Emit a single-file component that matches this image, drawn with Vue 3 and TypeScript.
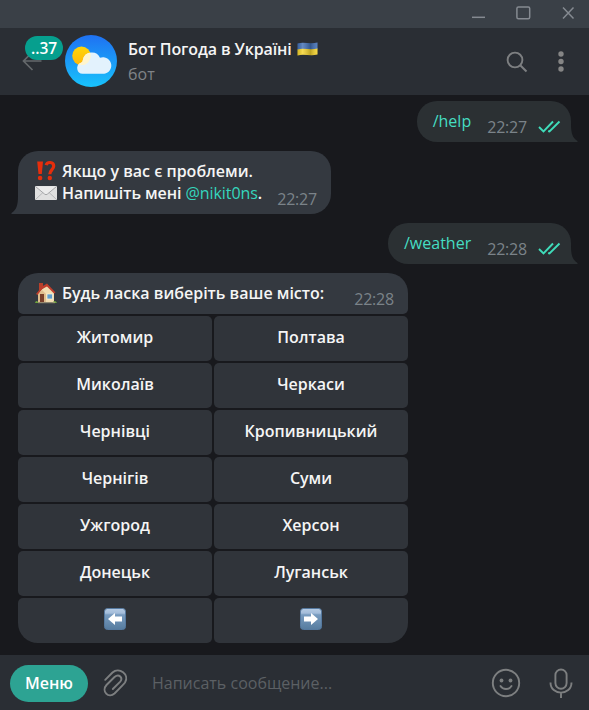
<script setup lang="ts">
interface Row {
  left: string
  right: string
}

const rows: Row[] = [
  { left: 'Житомир', right: 'Полтава' },
  { left: 'Миколаїв', right: 'Черкаси' },
  { left: 'Чернівці', right: 'Кропивницький' },
  { left: 'Чернігів', right: 'Суми' },
  { left: 'Ужгород', right: 'Херсон' },
  { left: 'Донецьк', right: 'Луганськ' },
]
</script>

<template>
  <div class="window">
    <div class="titlebar">
      <svg width="113" height="28" viewBox="0 0 113 28" fill="none" stroke="#858a91" stroke-width="1.5">
        <path d="M0 17.3H13" />
        <rect x="44.900" y="7" width="12.800" height="11.800" rx="1.500" />
        <path d="M91 7.5L101.500 18.500M101.500 7.500L91 18.500" />
      </svg>
    </div>

    <header class="header">
      <div class="back">
        <svg width="20" height="22" viewBox="0 0 20 22" fill="none" stroke="#64686b" stroke-width="1.7">
          <path d="M19.500 10H1.500M10.500 1L1.500 10L10.500 19" />
        </svg>
        <span class="badge">..37</span>
      </div>
      <svg class="avatar" width="52" height="52" viewBox="0 0 52 52">
        <defs>
          <linearGradient id="sky" x1="0" y1="0" x2="0" y2="1">
            <stop offset="0" stop-color="#1f71f2" />
            <stop offset="1" stop-color="#18c3fc" />
          </linearGradient>
          <linearGradient id="sun" x1="0" y1="0" x2="0" y2="1">
            <stop offset="0" stop-color="#ffd60a" />
            <stop offset="1" stop-color="#ffb70a" />
          </linearGradient>
          <clipPath id="cloud">
            <path d="M17.500 38.700A5.600 5.600 0 0 1 15.500 28Q18 27 18 24.500A9 9 0 0 1 35 22.800A8.300 8.300 0 1 1 36.500 38.700z" />
          </clipPath>
        </defs>
        <circle cx="26" cy="26" r="26" fill="url(#sky)" />
        <circle cx="16.500" cy="20.800" r="9.300" fill="url(#sun)" />
        <path d="M17.500 38.700A5.600 5.600 0 0 1 15.500 28Q18 27 18 24.500A9 9 0 0 1 35 22.800A8.300 8.300 0 1 1 36.500 38.700z" fill="#e3f2fd" />
        <circle cx="16.500" cy="20.800" r="9.300" fill="#fff5cf" clip-path="url(#cloud)" />
      </svg>
      <div class="peer">
        <div class="name">
          <span>Бот Погода в Україні</span>
          <svg width="21" height="16" viewBox="0 0 21 16">
            <defs>
              <linearGradient id="fold" x1="0" y1="0" x2="1" y2="0">
                <stop offset="0" stop-color="#000" stop-opacity=".12" />
                <stop offset=".25" stop-color="#fff" stop-opacity=".18" />
                <stop offset=".65" stop-color="#000" stop-opacity=".22" />
                <stop offset="1" stop-color="#fff" stop-opacity=".12" />
              </linearGradient>
            </defs>
            <path d="M.5 2.500C7 .5 13 3.500 20.500 1.500V8C13 10 7 7 .5 9z" fill="#416fb4" />
            <path d="M.5 8.500C7 6.500 13 9.500 20.500 7.500V13.500C13 15.500 7 12.500 .5 14.500z" fill="#f5d32c" />
            <path d="M.5 2.500C7 .5 13 3.500 20.500 1.500V13.500C13 15.500 7 12.500 .5 14.500z" fill="url(#fold)" />
          </svg>
        </div>
        <div class="status">бот</div>
      </div>
      <svg class="search" width="22" height="22" viewBox="0 0 22 22" fill="none" stroke="#7d7f81" stroke-width="1.900">
        <circle cx="9" cy="9" r="7.400" />
        <path d="M14.200 14.200L20.500 20.500" stroke-width="2" />
      </svg>
      <svg width="6" height="22" viewBox="0 0 6 22" fill="#858585">
        <circle cx="3" cy="3" r="2.700" />
        <circle cx="3" cy="10.500" r="2.700" />
        <circle cx="3" cy="18" r="2.700" />
      </svg>
    </header>

    <main class="chat">
      <div class="bubble out">
        <span class="command">/help</span>
        <span class="time">22:27</span>
        <svg class="ticks" width="23" height="13" viewBox="0 0 23 13" fill="none" stroke="#3fdcba" stroke-width="1.900">
          <path d="M1 7L5.500 11.500L15 1.500M10.200 11L11.500 11.500L21.500 1.500" />
        </svg>
        <svg class="tail" width="8" height="18" viewBox="0 0 8 18"><path d="M0 0H1C1 9 2.500 14 7.500 17V18H0z" fill="#2b3033" /></svg>
      </div>

      <div class="bubble in help">
        <div class="body">
          <div class="line">
            <svg class="emoji" width="22" height="22" viewBox="0 0 22 22">
              <path d="M2.200 1.500H8L6.800 14H3.500z" fill="#e62e0c" />
              <circle cx="5.100" cy="18" r="2.300" fill="#e62e0c" />
              <path d="M11.200 5.200C12 1.500 18.700 1.500 18.700 6C18.700 9.800 14.800 10 14.800 14.200" fill="none" stroke="#e62e0c" stroke-width="3.200" />
              <circle cx="14.800" cy="18" r="2.200" fill="#e62e0c" />
            </svg>
            <span>Якщо у вас є проблеми.</span>
          </div>
          <div class="line">
            <svg class="emoji" width="22" height="22" viewBox="0 0 22 22">
              <rect y="4" width="22" height="14" rx="1" fill="#e0e0e0" />
              <path d="M1 17L8.500 10M21 17L13.500 10" stroke="#b8b9bb" fill="none" />
              <path d="M.5 4.500L9.500 12Q11 13.500 12.500 12L21.500 4.500" fill="#ececec" stroke="#a5a6a8" />
            </svg>
            <span class="contact">Напишіть мені <a class="mention">@nikit0ns</a>.</span>
          </div>
        </div>
        <span class="time">22:27</span>
        <svg class="tail" width="8" height="18" viewBox="0 0 8 18"><path d="M8 0H7C7 9 5.500 14 .5 17V18H8z" fill="#343940" /></svg>
      </div>

      <div class="bubble out">
        <span class="command">/weather</span>
        <span class="time">22:28</span>
        <svg class="ticks" width="23" height="13" viewBox="0 0 23 13" fill="none" stroke="#3fdcba" stroke-width="1.900">
          <path d="M1 7L5.500 11.500L15 1.500M10.200 11L11.500 11.500L21.500 1.500" />
        </svg>
        <svg class="tail" width="8" height="18" viewBox="0 0 8 18"><path d="M0 0H1C1 9 2.500 14 7.500 17V18H0z" fill="#2b3033" /></svg>
      </div>

      <div class="bubble in choose">
        <div class="line">
          <svg class="emoji" width="22" height="22" viewBox="0 0 22 22">
            <rect x="4" y="1" width="4" height="7" fill="#b8402b" />
            <path d="M3 11L12 3L19 10V20H3z" fill="#f2ddb2" />
            <path d="M3 11V20H11V12L7 8z" fill="#dfbd8d" />
            <path d="M1 12L7 4.500L12 1.500L20.500 10.500L19 11.500L12 4.500L7 7L2.500 13z" fill="#bf3e2c" />
            <rect x="5" y="12" width="4" height="8.500" fill="#793f2a" />
            <rect x="12" y="12" width="5.500" height="5" fill="#5f9dcc" stroke="#fff3d7" stroke-width=".7" />
            <path d="M0 21Q1 17 4 21M17 21Q20 17 22 21z" fill="#6fa33c" />
            <path d="M3 20.700H20" stroke="#a49a7d" />
          </svg>
          <span>Будь ласка виберіть ваше місто:</span>
        </div>
        <span class="time">22:28</span>
      </div>

      <div class="keyboard">
        <template v-for="row in rows" :key="row.left">
          <button class="key">{{ row.left }}</button>
          <button class="key">{{ row.right }}</button>
        </template>
        <button v-for="side in ['prev', 'next']" :key="side" class="key" :class="side">
          <svg class="arrow" width="22" height="22" viewBox="0 0 22 22">
            <defs>
              <linearGradient :id="side + '-face'" x1="0" y1="0" x2="0" y2="1">
                <stop offset="0" stop-color="#b5cbe4" />
                <stop offset=".22" stop-color="#a4bdda" />
                <stop offset=".3" stop-color="#789bbf" />
                <stop offset="1" stop-color="#567c9f" />
              </linearGradient>
            </defs>
            <rect x=".5" y=".5" width="21" height="21" rx="3" :fill="`url(#${side}-face)`" stroke="#55799f" />
            <path d="M4 11L11 5V8.500H18V13.500H11V17z" fill="#fff" />
          </svg>
        </button>
      </div>
    </main>

    <footer class="composer">
      <button class="menu">Меню</button>
      <svg class="clip" width="26" height="28" viewBox="0 0 26 28" fill="none" stroke="#7d7f80" stroke-width="1.900" stroke-linecap="round">
        <path d="M2.200 10.800L9.500 3.500C16-2.500 27 5.500 22 13.500C21 15 14.500 21.500 11.500 24.500C5.500 30-2 22 3.500 16L11.500 8C16 4 20.500 9 17 12.800L9.800 20" />
      </svg>
      <span class="placeholder">Написать сообщение...</span>
      <svg class="smile" width="30" height="30" viewBox="0 0 30 30" fill="none" stroke="#7d7f80" stroke-width="1.900">
        <circle cx="15" cy="15" r="13.200" />
        <circle cx="10.500" cy="12.500" r="1.900" fill="#7d7f80" stroke="none" />
        <circle cx="19.500" cy="12.500" r="1.900" fill="#7d7f80" stroke="none" />
        <path d="M9.500 18C12 22 18 22 20.500 18" stroke-linecap="round" />
      </svg>
      <svg class="mic" width="24" height="30" viewBox="0 0 24 30" fill="none" stroke="#7d7f80" stroke-width="1.900">
        <rect x="6.400" y="1.500" width="11.200" height="19.200" rx="5.600" />
        <path d="M1.500 14.500C1.500 28 22.500 28 22.500 14.500M12 24.500V30" />
      </svg>
    </footer>
  </div>
</template>

<style>
body {
  background: #18191d;
}
</style>

<style scoped>
.window {
  width: 589px;
  height: 710px;
  display: flex;
  flex-direction: column;
  overflow: hidden;
  background: #18191d;
  color: #f5f5f5;
  font: 600 16px/22px 'Open Sans', 'Noto Sans', sans-serif;
}
svg {
  display: block;
  flex: none;
}
button {
  border: 0;
  padding: 0;
  color: inherit;
  font: inherit;
}
.titlebar {
  height: 28px;
  flex: none;
  display: flex;
  justify-content: flex-end;
  padding-right: 4px;
  background: #3a4047;
}
.header {
  height: 67px;
  flex: none;
  display: flex;
  align-items: center;
  padding: 0 25px 0 22px;
  box-sizing: border-box;
  background: #2a2e34;
}
.back {
  position: relative;
  width: 43px;
}
.badge {
  position: absolute;
  left: 3px;
  top: -15px;
  width: 38px;
  height: 24px;
  border-radius: 12px;
  background: #069f8e;
  color: #fff;
  font-size: 15.5px;
  font-weight: 600;
  line-height: 24px;
  text-align: center;
}
.avatar {
  margin-top: -2px;
}
.peer {
  flex: 1;
  margin-left: 11px;
}
.name {
  display: flex;
  align-items: center;
  gap: 5px;
  height: 24px;
  font-size: 16px;
  letter-spacing: -0.1px;
  white-space: nowrap;
}
.status {
  color: #808488;
  font-size: 16px;
  font-weight: 400;
  line-height: 26px;
}
.search {
  margin: 1px 30px 0 0;
}
.chat {
  flex: 1;
  display: flex;
  flex-direction: column;
  align-items: flex-start;
  gap: 9px;
  padding: 6px 18px 0;
}
.bubble {
  position: relative;
  display: flex;
  box-sizing: border-box;
  flex: none;
}
.out {
  align-self: flex-end;
  height: 41px;
  padding: 9px 10px 0 16px;
  border-radius: 20px 20px 0 20px;
  background: #2b3033;
  color: #45ddc2;
  font-weight: 400;
}
.time {
  color: #7b8389;
  font-size: 16px;
  font-weight: 400;
  line-height: 22px;
  letter-spacing: -0.2px;
}
.out .time {
  margin: 6px 0 0 16px;
}
.ticks {
  margin: 10px 0 0 11px;
}
.tail {
  position: absolute;
  bottom: 0;
}
.out .tail {
  right: -7px;
}
.in {
  background: #343940;
}
.help {
  width: 313px;
  height: 63px;
  padding: 9px 14px 0 17px;
  border-radius: 20px 20px 20px 0;
  justify-content: space-between;
}
.help .time {
  margin-top: 28px;
}
.help .tail {
  left: -7px;
}
.line {
  display: flex;
  gap: 5px;
  height: 22px;
  white-space: nowrap;
}
.contact {
  letter-spacing: -0.07px;
}
.mention {
  color: #34d6bd;
  font-weight: 400;
}
.choose {
  width: 390px;
  height: 41px;
  padding: 9px 14px 0 17px;
  border-radius: 20px 20px 5px 5px;
  justify-content: space-between;
}
.choose .time {
  margin-top: 6px;
}
.keyboard {
  margin-top: -7px;
  display: grid;
  grid-template-columns: 194px 194px;
  grid-auto-rows: 45px;
  gap: 2px;
}
.key {
  display: flex;
  justify-content: center;
  align-items: center;
  padding-bottom: 3px;
  border-radius: 5px;
  background: #30343a;
}
.prev {
  border-bottom-left-radius: 20px;
}
.next {
  border-bottom-right-radius: 20px;
}
.next .arrow path {
  transform: translateX(22px) scaleX(-1);
}
.composer {
  height: 55px;
  flex: none;
  display: flex;
  align-items: center;
  padding: 1px 16px 0 10px;
  box-sizing: border-box;
  background: #2a2e34;
}
.menu {
  width: 78px;
  height: 37px;
  border-radius: 19px;
  background: #2da393;
  color: #fff;
  font-weight: 600;
}
.clip {
  margin-left: 15px;
}
.placeholder {
  flex: 1;
  margin-left: 23px;
  color: #5c6064;
  font-weight: 400;
}
.smile {
  margin-right: 28px;
}
</style>
